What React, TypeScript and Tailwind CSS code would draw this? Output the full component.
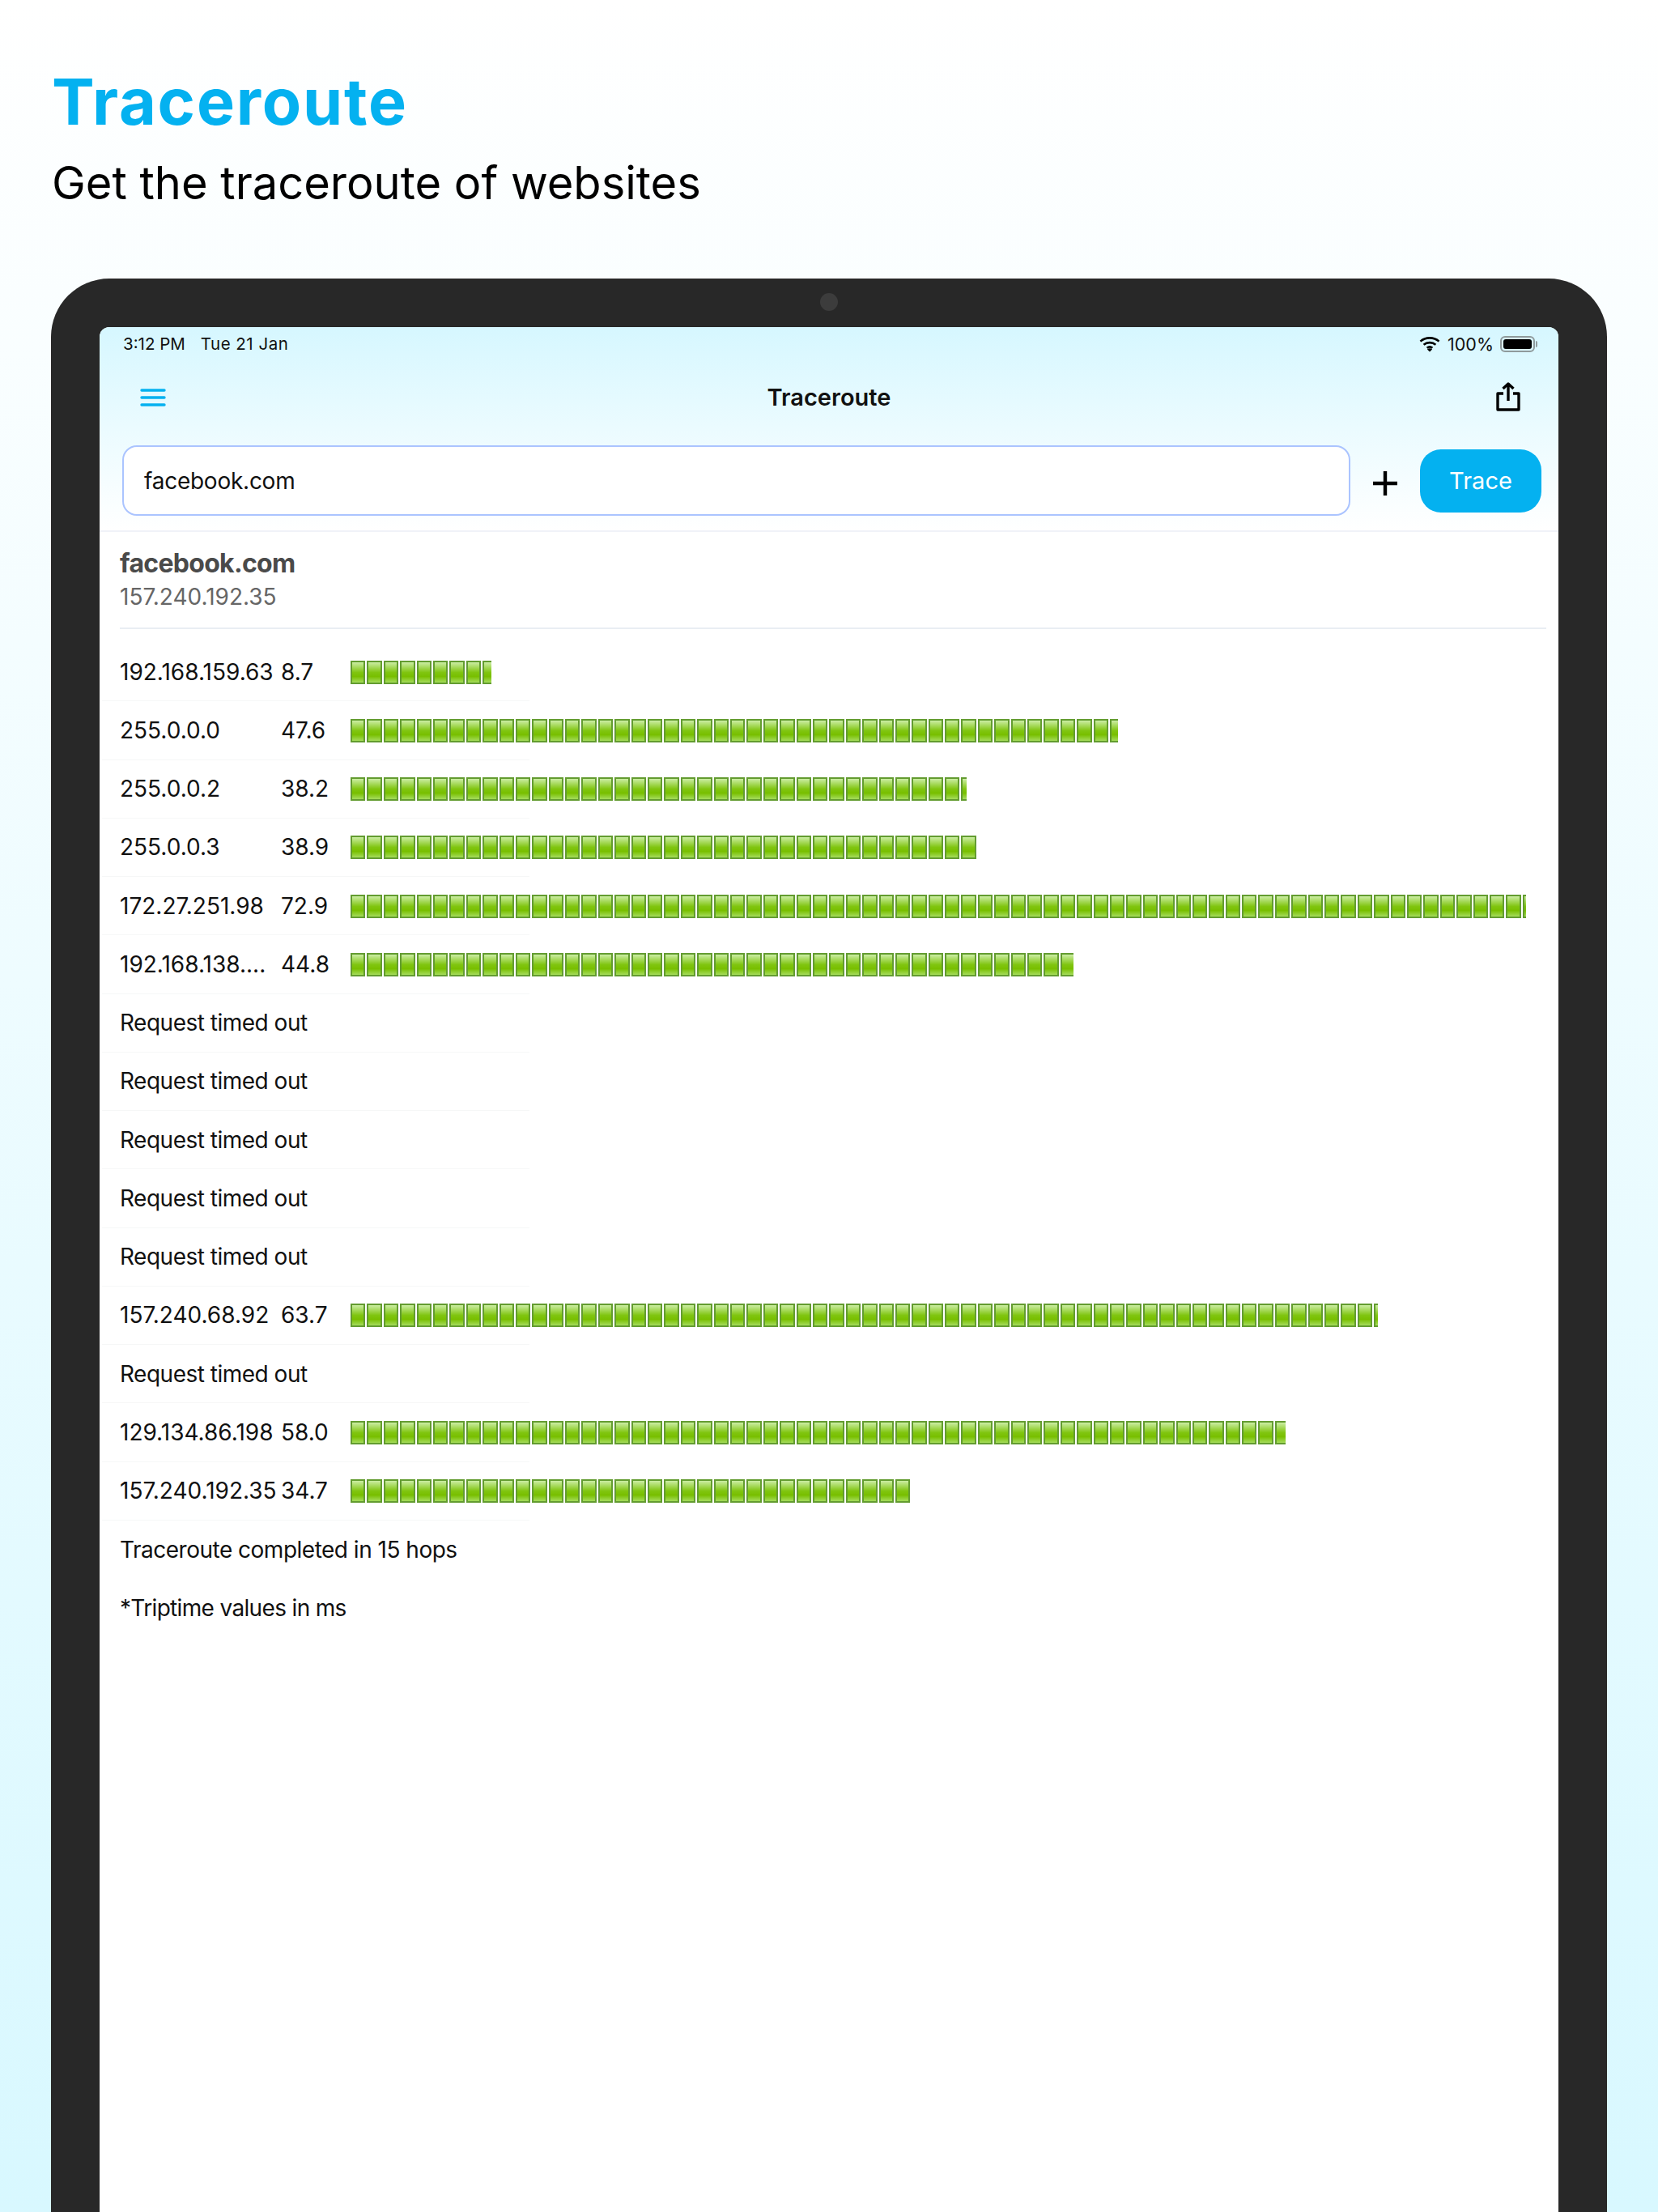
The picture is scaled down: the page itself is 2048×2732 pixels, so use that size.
const FONT = "font-['Inter','Liberation_Sans',sans-serif]";

type Row = { ip?: string; v?: number; text?: string };

const rows: Row[] = [
  { ip: "192.168.159.63", v: 8.7 },
  { ip: "255.0.0.0", v: 47.6 },
  { ip: "255.0.0.2", v: 38.2 },
  { ip: "255.0.0.3", v: 38.9 },
  { ip: "172.27.251.98", v: 72.9 },
  { ip: "192.168.138....", v: 44.8 },
  { text: "Request timed out" },
  { text: "Request timed out" },
  { text: "Request timed out" },
  { text: "Request timed out" },
  { text: "Request timed out" },
  { ip: "157.240.68.92", v: 63.7 },
  { text: "Request timed out" },
  { ip: "129.134.86.198", v: 58.0 },
  { ip: "157.240.192.35", v: 34.7 },
];

function Bar({ v }: { v: number }) {
  const width = v * 19.9 + 1;
  const count = Math.ceil(width / 20.4);
  return (
    <div className="flex h-[29px] gap-[2px] overflow-hidden" style={{ width }}>
      {Array.from({ length: count }).map((_, i) => (
        <div
          key={i}
          className="h-[29px] w-[18.4px] shrink-0 border-[2px] border-[#639c30] bg-[linear-gradient(180deg,#cbeda3_0%,#80c510_50%,#78bf00_70%,#a5dc5c_100%)]"
        />
      ))}
    </div>
  );
}

function Wifi() {
  return (
    <svg width="26" height="20" viewBox="0 0 26 20" fill="none" stroke="#000" strokeWidth="2.6">
      <path d="M1.5 6.6C7.8 1 18.2 1 24.5 6.6" />
      <path d="M5.6 10.8C9.8 7.2 16.2 7.2 20.4 10.8" />
      <path d="M9.6 14.8C11.6 13.2 14.4 13.2 16.4 14.8" />
      <path d="M13 19.4L9.9 16.4C11.8 15 14.2 15 16.1 16.4Z" fill="#000" stroke="none" />
    </svg>
  );
}

export default function App() {
  return (
    <div className={`${FONT} h-[2732px] w-[2048px] overflow-hidden bg-gradient-to-b from-white to-[#d8f8ff]`}>
      <div className="h-[344px] pl-[64px] pt-[78px]">
        <h1 className="text-[79px] font-bold leading-[94px] tracking-[1.8px] text-[#04b1f0]">Traceroute</h1>
        <p className="mt-[20px] text-[56px] leading-[68px] text-black">Get the traceroute of websites</p>
      </div>

      <div className="relative mx-[63px] h-[2388px] rounded-t-[72px] bg-[#282828] px-[60px] pt-[60px]">
        <div className="absolute left-1/2 top-[18px] h-[22px] w-[22px] -translate-x-1/2 rounded-full bg-[#3c3c3c]" />
        <div className="h-full overflow-hidden rounded-t-[12px] bg-white">
          <div className="h-[253px] border-b-2 border-[#f0f2f8] bg-gradient-to-b from-[#d6f7ff] to-white">
            <div className="flex h-[42px] items-center justify-between pl-[29px] pr-[26px] text-[20.5px] text-[#111]">
              <div className="flex gap-[19px]">
                <span>3:12 PM</span>
                <span className="tracking-[0.5px]">Tue 21 Jan</span>
              </div>
              <div className="flex items-center gap-[7px]">
                <div className="mr-[2px]">
                  <Wifi />
                </div>
                <span className="text-[21.5px]">100%</span>
                <div className="ml-[1px] flex items-center">
                  <div className="h-[20px] w-[43px] rounded-[6px] border-2 border-[#8f9a9c] p-[2px]">
                    <div className="h-full w-full rounded-[3px] bg-black" />
                  </div>
                  <div className="ml-[1px] h-[8px] w-[2px] rounded-r-full bg-[#8f9a9c]" />
                </div>
              </div>
            </div>

            <div className="relative flex h-[90px] items-center justify-between pl-[50px] pr-[47px]">
              <svg width="32" height="22" viewBox="0 0 32 22" fill="none" stroke="#04b1f0" strokeWidth="3.4" strokeLinecap="round">
                <path d="M2 2H30M2 11H30M2 20H30" />
              </svg>
              <span className="absolute left-1/2 -translate-x-1/2 text-[29px] font-semibold text-[#111]">Traceroute</span>
              <svg className="mb-[2px]" width="30" height="36" viewBox="0 0 30 36" fill="none" stroke="#000" strokeWidth="3.4" strokeLinejoin="round">
                <path d="M9 14H2V34H28V14H21" />
                <path d="M15 23V2M8.5 8L15 2L21.5 8" />
              </svg>
            </div>

            <div className="flex items-center pl-[28px] pr-[21px] pt-[14px]">
              <div className="flex h-[87px] w-[1517px] items-center rounded-[18px] border-2 border-[#abc4ff] bg-white pl-[25px] pt-[1px] text-[28px] tracking-[-0.25px] text-[#111]">
                facebook.com
              </div>
              <svg className="ml-[28px] mt-[6px]" width="30" height="30" viewBox="0 0 30 30" fill="none" stroke="#000" strokeWidth="4.4">
                <path d="M15 0V30M0 15H30" />
              </svg>
              <button className="ml-[28px] h-[78px] w-[150px] rounded-[26px] bg-[#04b1f0] pt-[1px] text-[29px] text-white">Trace</button>
            </div>
          </div>

          <div className="pl-[25px] pr-[15px]">
            <div className="h-[120px] border-b-2 border-[#e9eef3] pt-[17px]">
              <div className="text-[32px] font-bold leading-[44px] tracking-[-0.7px] text-[#4a4a4a]">facebook.com</div>
              <div className="text-[28px] leading-[38px] text-[#666]">157.240.192.35</div>
            </div>
          </div>

          <div className="pt-[17px]">
            {rows.map((r, i) => (
              <div key={i} className="flex h-[72.25px] text-[28px] text-[#111]">
                <div className="ml-[3px] flex w-[528px] shrink-0 items-center border-b border-[#f6f7f7] pl-[22px]">
                  {r.text ? (
                    <span className="tracking-[-0.5px]">{r.text}</span>
                  ) : (
                    <>
                      <span className="w-[199px] shrink-0">{r.ip}</span>
                      <span>{r.v?.toFixed(1)}</span>
                    </>
                  )}
                </div>
                {r.v !== undefined && (
                  <div className="ml-[-221px] flex items-center">
                    <Bar v={r.v} />
                  </div>
                )}
              </div>
            ))}
            <div className="flex h-[72.25px] items-center pl-[25px] text-[28px] tracking-[-0.5px] text-[#111]">Traceroute completed in 15 hops</div>
            <div className="flex h-[72.25px] items-center pl-[25px] text-[28px] tracking-[-0.66px] text-[#111]">*Triptime values in ms</div>
          </div>
        </div>
      </div>
    </div>
  );
}
